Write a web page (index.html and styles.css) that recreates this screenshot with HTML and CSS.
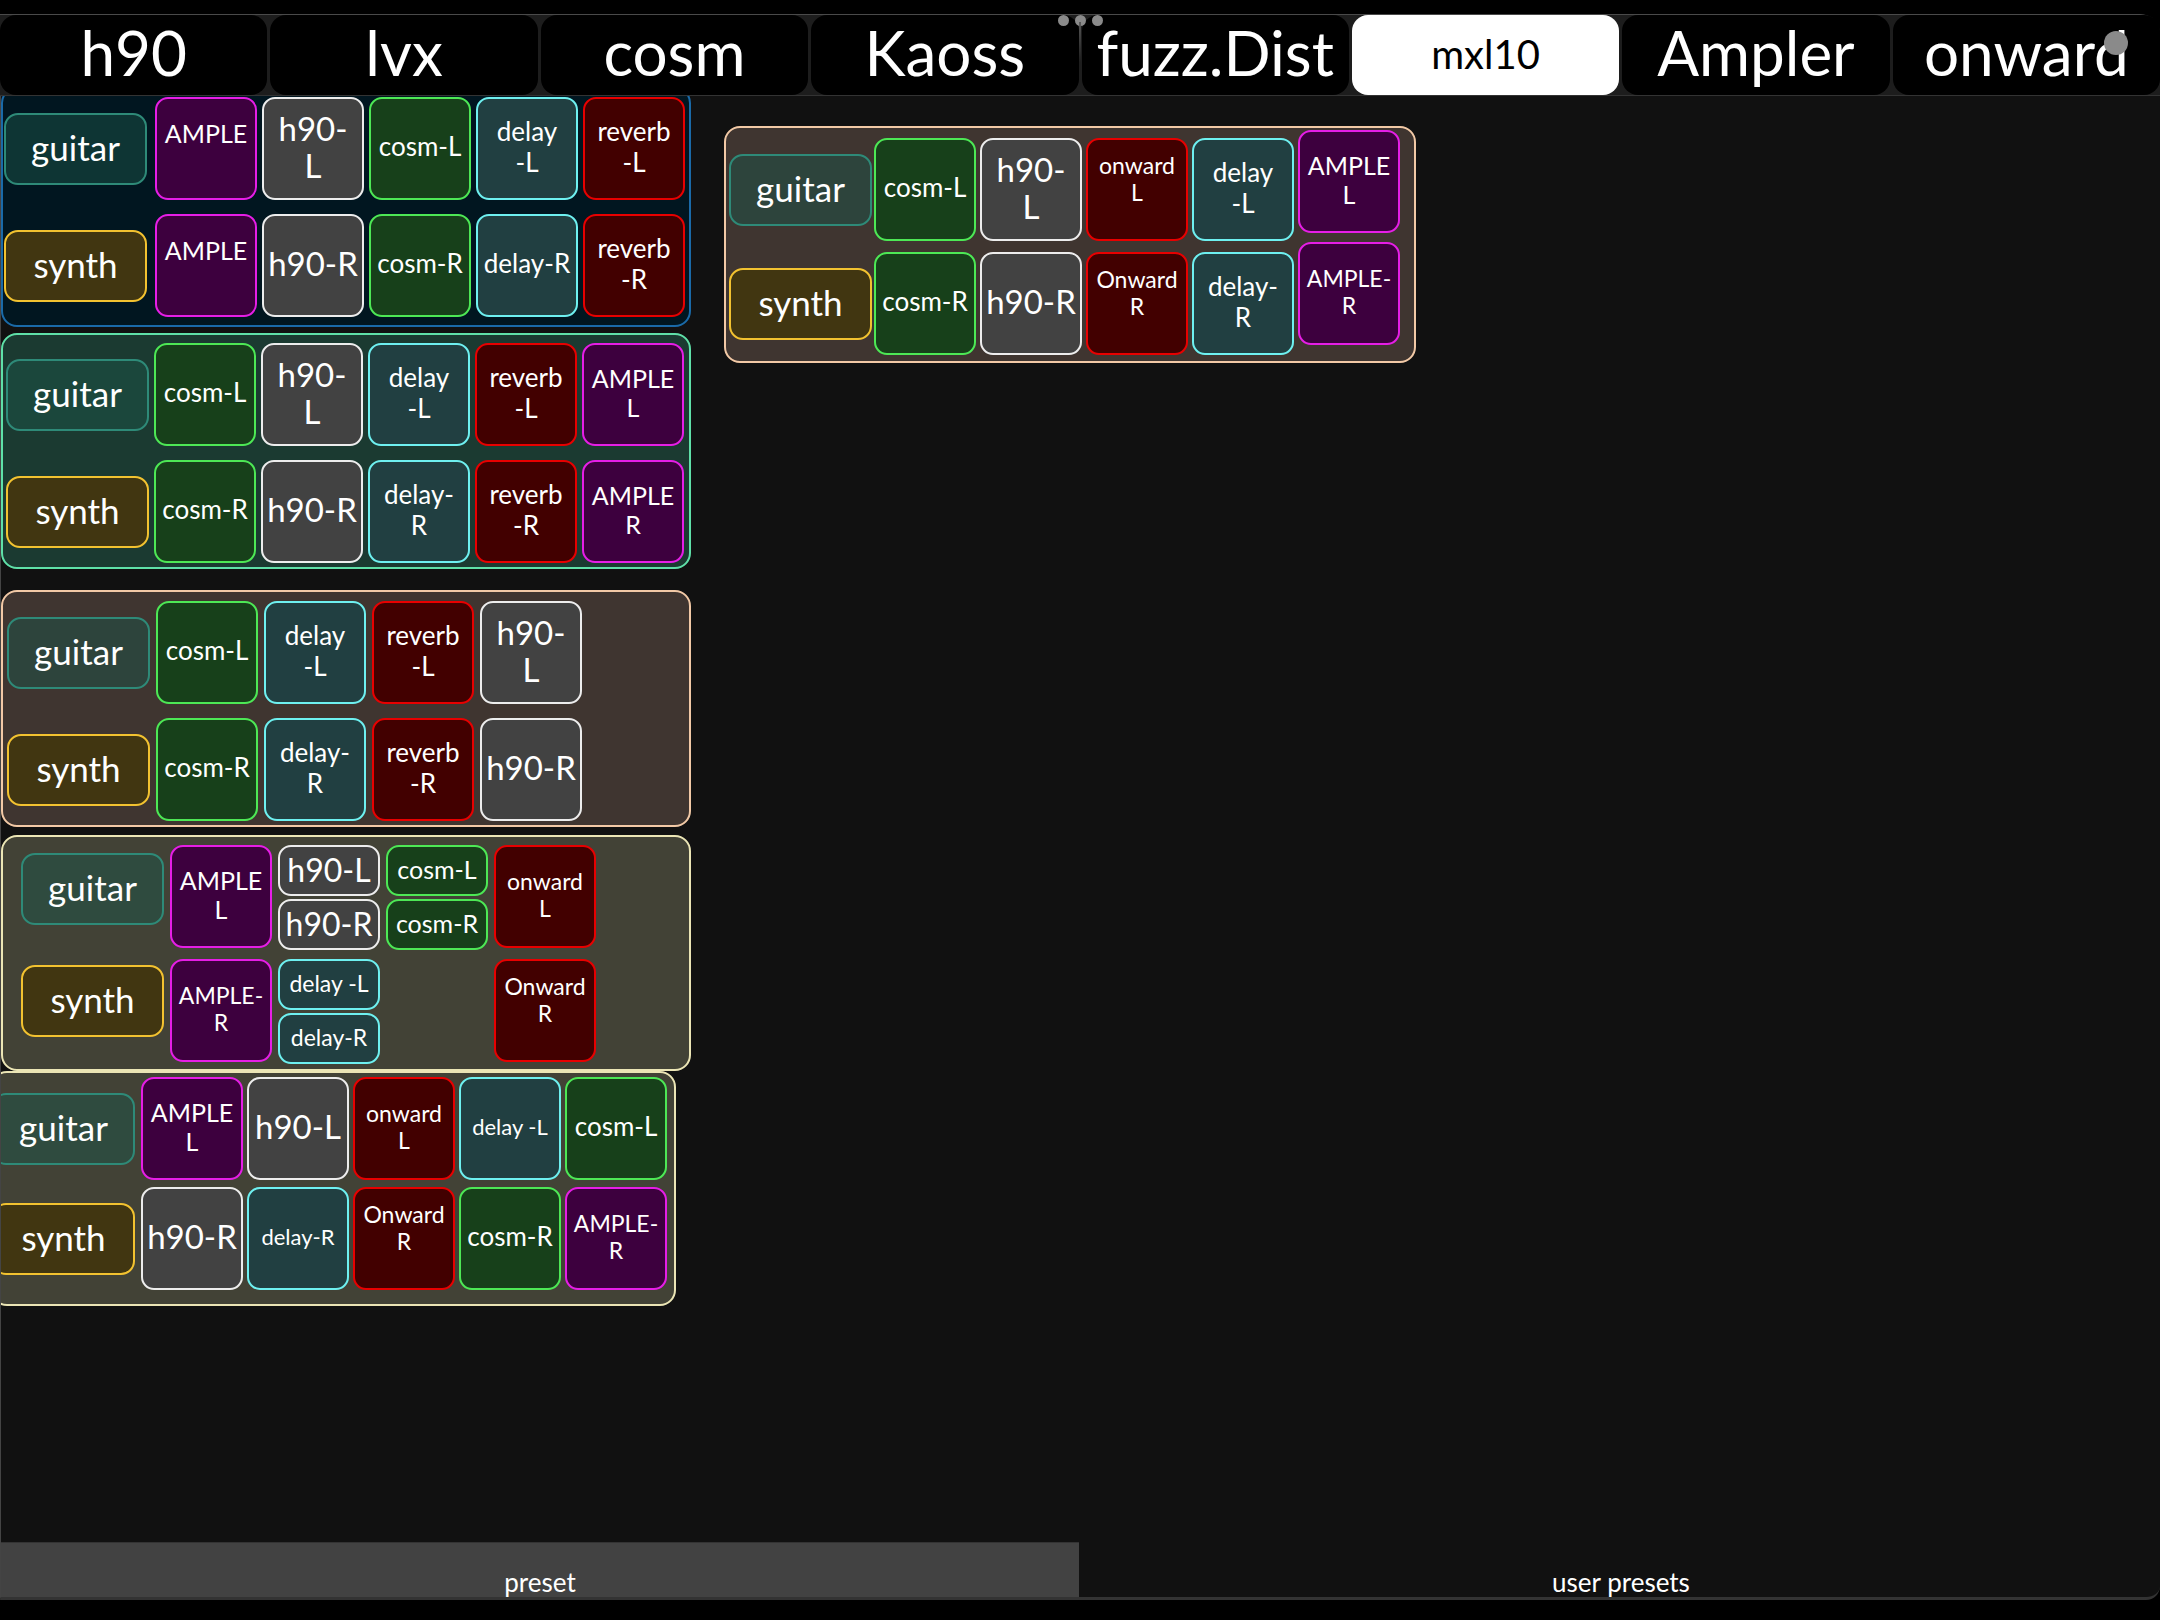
FILE: index.html
```html
<!DOCTYPE html>
<html>
<head>
<meta charset="utf-8">
<link rel="stylesheet" href="styles.css">
</head>
<body>
<div class="app">
  <div class="tabbar">
    <div class="tabs">
      <div class="tab">h90</div>
      <div class="tab">lvx</div>
      <div class="tab">cosm</div>
      <div class="tab">Kaoss</div>
      <div class="tab">fuzz.Dist</div>
      <div class="tab active">mxl10</div>
      <div class="tab">Ampler</div>
      <div class="tab">onward</div>
    </div>
    <div class="dots"><span></span><span></span><span></span></div>
    <div class="grip"></div>
    <div class="blob"></div>
  </div>

  <div class="main">
    <div class="col-left">
      <div class="block b1">
        <div class="row">
          <div class="label guitar">guitar</div>
          <div class="tile ample up">AMPLE</div>
          <div class="tile h90">h90-<br>L</div>
          <div class="tile cosm">cosm-L</div>
          <div class="tile delay">delay<br>-L</div>
          <div class="tile rev">reverb<br>-L</div>
        </div>
        <div class="row">
          <div class="label synth">synth</div>
          <div class="tile ample up">AMPLE</div>
          <div class="tile h90">h90-R</div>
          <div class="tile cosm">cosm-R</div>
          <div class="tile delay">delay-R</div>
          <div class="tile rev">reverb<br>-R</div>
        </div>
      </div>

      <div class="block b2">
        <div class="row">
          <div class="label guitar">guitar</div>
          <div class="tile cosm">cosm-L</div>
          <div class="tile h90">h90-<br>L</div>
          <div class="tile delay">delay<br>-L</div>
          <div class="tile rev">reverb<br>-L</div>
          <div class="tile ample">AMPLE<br>L</div>
        </div>
        <div class="row">
          <div class="label synth">synth</div>
          <div class="tile cosm">cosm-R</div>
          <div class="tile h90">h90-R</div>
          <div class="tile delay">delay-<br>R</div>
          <div class="tile rev">reverb<br>-R</div>
          <div class="tile ample">AMPLE<br>R</div>
        </div>
      </div>

      <div class="block b3">
        <div class="row">
          <div class="label guitar">guitar</div>
          <div class="tile cosm">cosm-L</div>
          <div class="tile delay">delay<br>-L</div>
          <div class="tile rev">reverb<br>-L</div>
          <div class="tile h90">h90-<br>L</div>
        </div>
        <div class="row">
          <div class="label synth">synth</div>
          <div class="tile cosm">cosm-R</div>
          <div class="tile delay">delay-<br>R</div>
          <div class="tile rev">reverb<br>-R</div>
          <div class="tile h90">h90-R</div>
        </div>
      </div>

      <div class="block b4">
        <div class="row">
          <div class="label guitar">guitar</div>
          <div class="tile ample">AMPLE<br>L</div>
          <div class="stack">
            <div class="tile half h90">h90-L</div>
            <div class="tile half h90">h90-R</div>
          </div>
          <div class="stack">
            <div class="tile half cosm">cosm-L</div>
            <div class="tile half cosm">cosm-R</div>
          </div>
          <div class="tile rev sm">onward<br>L</div>
        </div>
        <div class="row">
          <div class="label synth">synth</div>
          <div class="tile ample sm">AMPLE-<br>R</div>
          <div class="stack">
            <div class="tile half delay sm">delay -L</div>
            <div class="tile half delay sm">delay-R</div>
          </div>
          <div class="spacer"></div>
          <div class="tile rev sm up2">Onward<br>R</div>
        </div>
      </div>

      <div class="block b5">
        <div class="row">
          <div class="label guitar">guitar</div>
          <div class="tile ample">AMPLE<br>L</div>
          <div class="tile h90">h90-L</div>
          <div class="tile rev sm">onward<br>L</div>
          <div class="tile delay xs">delay -L</div>
          <div class="tile cosm">cosm-L</div>
        </div>
        <div class="row">
          <div class="label synth">synth</div>
          <div class="tile h90">h90-R</div>
          <div class="tile delay xs">delay-R</div>
          <div class="tile rev sm up2">Onward<br>R</div>
          <div class="tile cosm">cosm-R</div>
          <div class="tile ample sm">AMPLE-<br>R</div>
        </div>
      </div>
    </div>

    <div class="col-right">
      <div class="block b6">
        <div class="row">
          <div class="label guitar">guitar</div>
          <div class="tile cosm">cosm-L</div>
          <div class="tile h90">h90-<br>L</div>
          <div class="tile rev sm up2">onward<br>L</div>
          <div class="tile delay">delay<br>-L</div>
          <div class="tile ample lift">AMPLE<br>L</div>
        </div>
        <div class="row">
          <div class="label synth">synth</div>
          <div class="tile cosm">cosm-R</div>
          <div class="tile h90">h90-R</div>
          <div class="tile rev sm up2">Onward<br>R</div>
          <div class="tile delay">delay-<br>R</div>
          <div class="tile ample sm lift2">AMPLE-<br>R</div>
        </div>
      </div>
    </div>
  </div>

  <div class="bottombar">
    <div class="btab selected">preset</div>
    <div class="btab">user presets</div>
  </div>
  <div class="foot"></div>
</div>
</body>
</html>
```

FILE: styles.css
```css
* { box-sizing: border-box; margin: 0; padding: 0; }
html, body { width: 2160px; height: 1620px; overflow: hidden; background: #000; }
body { font-family: "Lato", "Noto Sans", sans-serif; color: #fff; }

.app { display: flex; flex-direction: column; height: 1620px; }

/* top tab bar */
.tabbar { position: relative; height: 96px; padding-top: 14px; background: #000; flex: none; }
.tabs {
  display: grid; grid-template-columns: repeat(8, 1fr); column-gap: 3px;
  height: 82px; background: #1d1d1d;
  border-top: 1px solid #4a4a4a; border-bottom: 1px solid #333;
  border-radius: 0 20px 0 0;
}
.tab {
  background: #000; border-radius: 16px;
  display: flex; align-items: center; justify-content: center;
  font-size: 62px; line-height: 1; padding-bottom: 6px; color: #fff;
}
.tab.active { background: #fff; color: #000; font-size: 40px; padding-bottom: 2px; }

.dots { position: absolute; left: 1058px; top: 15px; display: flex; gap: 6px; }
.dots span { width: 11px; height: 11px; border-radius: 50%; background: #8a8a8a; }
.grip { position: absolute; left: 1079px; top: 22px; width: 2px; height: 40px; background: linear-gradient(#555, rgba(60,60,60,0)); }
.blob { position: absolute; left: 2104px; top: 31px; width: 24px; height: 24px; border-radius: 50%; background: #8a8a8a; }

/* canvas */
.main {
  display: flex; height: 1446px; flex: none; overflow: hidden;
  background: #111; border-left: 1px solid #444;
}
.col-left { width: 700px; display: flex; flex-direction: column; flex: none; }
.col-right { margin-left: 23px; margin-top: 30px; }

.block {
  width: 690px; border: 2px solid; border-radius: 16px;
  display: flex; flex-direction: column; row-gap: 14px;
}
.row { display: flex; align-items: center; column-gap: 5px; }

.b1 { margin-top: -9px; height: 240px; background: #011620; border-color: #1a6aa8; padding: 8px 0 0 0; }
.b1 .label { margin-left: 1px; margin-right: 3px; }
.b2 { margin-top: 6px; height: 236px; background: #1b3a31; border-color: #5fe0a8; padding: 8px 0 0 3px; }
.b3 { margin-top: 21px; height: 237px; background: #3f3530; border-color: #f2c9a6; padding: 9px 0 0 4px; }
.b3 .row { column-gap: 6px; }
.b4 { margin-top: 8px; height: 236px; background: #424236; border-color: #ebe5b5; padding: 8px 0 0 18px; row-gap: 9px; }
.b4 .row { align-items: flex-start; column-gap: 6px; }
.b4 .label { margin-top: 8px; }
.b4 .row + .row .label { margin-top: 6px; }
.b5 { margin-top: 0; margin-left: -10px; width: 685px; height: 235px; background: #424236; border-color: #ebe5b5; padding: 4px 0 0 0; row-gap: 7px; }
.b5 .label { margin-left: -1px; margin-right: 2px; }
.b5 .row { column-gap: 4px; }
.b6 { width: 692px; height: 237px; background: #3f3530; border-color: #f2c9a6; padding: 10px 0 0 3px; row-gap: 11px; }
.b6 .row { column-gap: 4px; }
.b6 .label { margin-right: -2px; }

/* labels */
.label {
  width: 143px; height: 72px; flex: none; border: 2px solid; border-radius: 14px;
  display: flex; align-items: center; justify-content: center;
  font-size: 35px; padding-bottom: 4px;
}
.label.guitar { border-color: #2e8a78; background: rgba(28, 84, 72, 0.5); }
.label.synth { border-color: #f2c230; background: #413611; }

/* tiles */
.tile {
  width: 102px; height: 103px; flex: none; border: 2px solid; border-radius: 13px;
  display: flex; align-items: center; justify-content: center; text-align: center;
  font-size: 26px; line-height: 1.16; white-space: nowrap; padding-bottom: 4px;
}
.tile.ample { background: #3d003e; border-color: #e61ee6; font-size: 25px; }
.tile.h90 { background: #424242; border-color: #ededed; font-size: 33px; line-height: 1.1; }
.tile.cosm { background: #17401a; border-color: #4de855; }
.tile.delay { background: #213f41; border-color: #6ef0f0; }
.tile.rev { background: #420000; border-color: #e80000; }
.tile.sm { font-size: 23px; }
.tile.xs { font-size: 22px; }
.tile.up { padding-bottom: 30px; }
.tile.up2 { padding-bottom: 22px; }
.tile.lift { margin-top: -16px; }
.tile.lift2 { margin-top: -20px; }

.stack { display: flex; flex-direction: column; row-gap: 3px; }
.tile.half { height: 51px; padding-bottom: 2px; }
.tile.h90.half { font-size: 32px; }
.tile.cosm.half { font-size: 25px; }
.spacer { width: 102px; flex: none; }

/* bottom bar */
.bottombar { display: flex; height: 58px; flex: none; background: #111; border-left: 1px solid #444; border-bottom: 3px solid #333; border-radius: 0 0 14px 0; }
.btab {
  flex: 1; display: flex; align-items: flex-end; justify-content: center;
  font-size: 26px; line-height: 1; padding-bottom: 2px; color: #fff;
}
.btab.selected { background: #424242; border-top: 1px solid #333; margin-right: 3px; }
.foot { flex: 1; background: #000; }
```
